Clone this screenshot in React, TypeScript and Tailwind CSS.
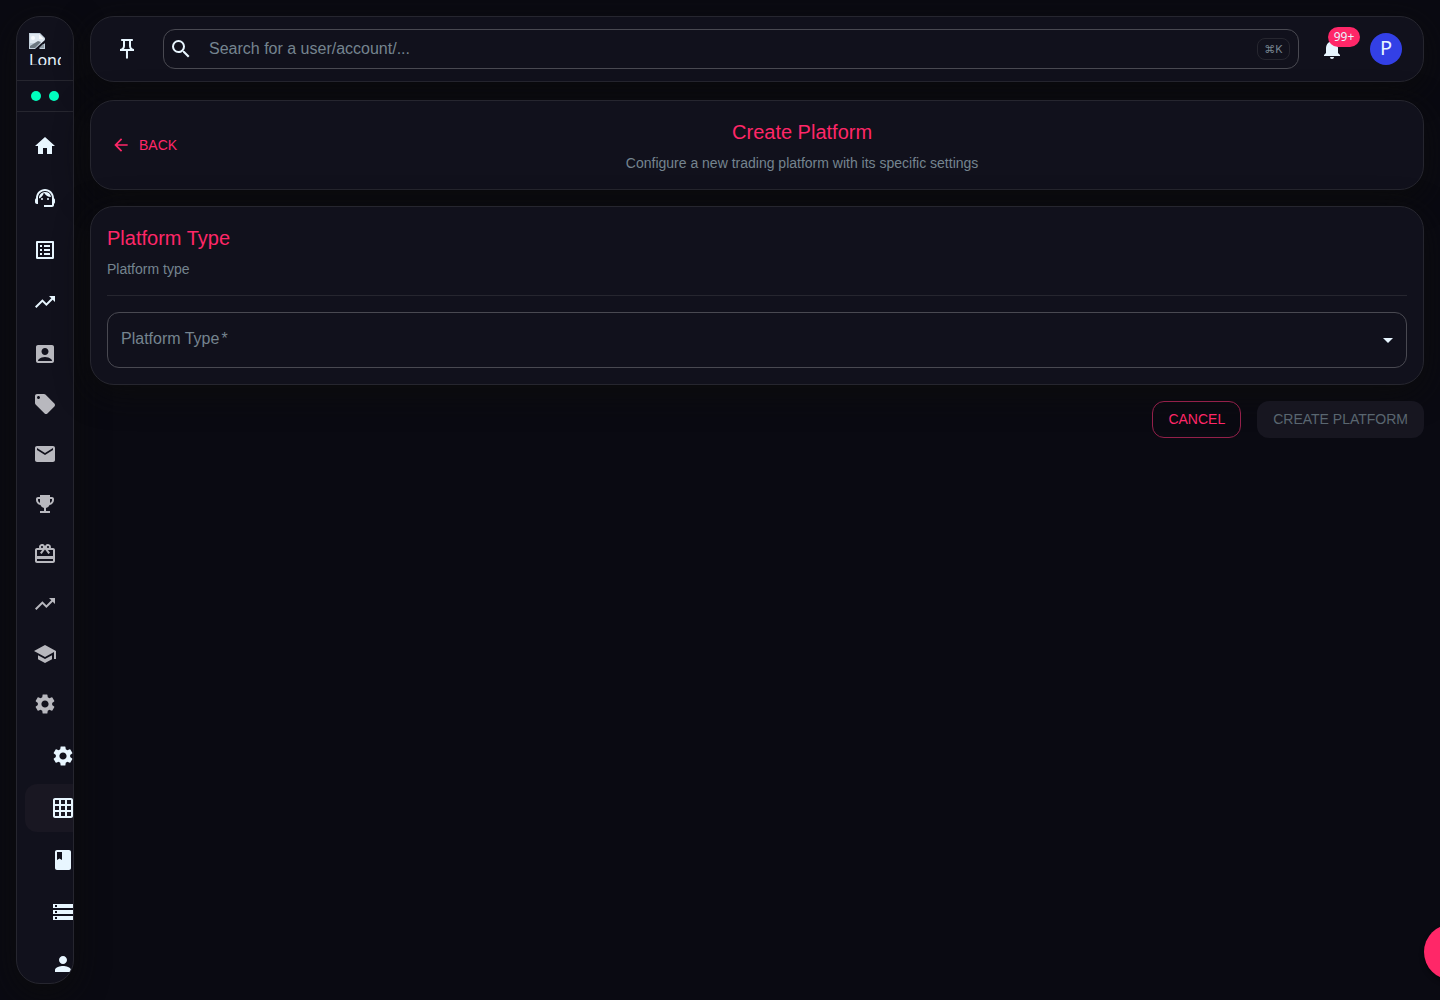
import { useState } from "react";
import type { IconType } from "react-icons";
import {
    MdAccountBox,
    MdArrowBack,
    MdArrowDropDown,
    MdBook,
    MdCardGiftcard,
    MdEmail,
    MdEmojiEvents,
    MdGridOn,
    MdHome,
    MdListAlt,
    MdLocalOffer,
    MdNotifications,
    MdOutlinePushPin,
    MdPerson,
    MdSchool,
    MdSearch,
    MdSettings,
    MdStorage,
    MdSupportAgent,
    MdTrendingUp,
} from "react-icons/md";
import { clsx } from "clsx";

type NavItem = { name: string; href: string; icon: IconType; active?: boolean };

const mainLinks: NavItem[] = [
    { name: "Home", href: "#home", icon: MdHome },
    { name: "Support", href: "#support", icon: MdSupportAgent },
    { name: "Lists", href: "#lists", icon: MdListAlt },
    { name: "Trading", href: "#trading", icon: MdTrendingUp },
];

const groups: NavItem[] = [
    { name: "Accounts", href: "#accounts", icon: MdAccountBox },
    { name: "Offers", href: "#offers", icon: MdLocalOffer },
    { name: "Mail", href: "#mail", icon: MdEmail },
    { name: "Competitions", href: "#competitions", icon: MdEmojiEvents },
    { name: "Rewards", href: "#rewards", icon: MdCardGiftcard },
    { name: "Growth", href: "#growth", icon: MdTrendingUp },
    { name: "Education", href: "#education", icon: MdSchool },
    { name: "Settings", href: "#settings", icon: MdSettings },
];

const settingsLinks: NavItem[] = [
    { name: "General", href: "#general", icon: MdSettings },
    { name: "Platforms", href: "#platforms", icon: MdGridOn, active: true },
    { name: "Documentation", href: "#documentation", icon: MdBook },
    { name: "Servers", href: "#servers", icon: MdStorage },
    { name: "Users", href: "#users", icon: MdPerson },
];

const card = "rounded-3xl border border-[#26262f] bg-[#11111c] shadow-[0_8px_32px_rgba(12,12,12,0.9)]";

function BrokenImage() {
    return (
        <svg viewBox="0 0 16 16" className="block h-4 w-4" aria-hidden="true">
            <path d="M0 0h11l5 5v11H0z" fill="#c3d0dc" />
            <path d="M1 1h9v5h5v4H1z" fill="#dfe8f0" />
            <path d="M10 1l5 5h-5z" fill="#f6f8fa" />
            <circle cx="4" cy="5" r="2" fill="#f8fbfd" />
            <path d="M1 15v-2l8-5 3 1-6 6z" fill="#6c7780" />
            <path d="M16 7v3l-6 6H6z" fill="#11111c" />
            <path d="M10 15l4-4h1v4z" fill="#8f9ba5" />
        </svg>
    );
}

function Sidebar() {
    return (
        <aside className={clsx(card, "flex w-[58px] shrink-0 flex-col overflow-hidden text-[#e8f6ff]")}>
            <a href="#home" className="flex h-16 shrink-0 flex-col items-center justify-center border-b border-[#26262f]">
                <span className="block h-8 w-8 overflow-hidden">
                    <BrokenImage />
                    <span className="block font-['Noto_Sans',sans-serif] text-base leading-[22px]">London</span>
                </span>
            </a>
            <div className="flex h-[31px] shrink-0 items-center justify-center gap-2 border-b border-[#26262f]">
                <span className="h-2.5 w-2.5 rounded-full bg-[#00ffbf]" />
                <span className="h-2.5 w-2.5 rounded-full bg-[#00ffbf]" />
            </div>
            <nav className="min-h-0 flex-1 overflow-hidden px-2 pt-[10px]">
                <ul className="flex flex-col gap-1">
                    {mainLinks.map(({ name, href, icon: Icon }) => (
                        <li key={name}>
                            <a href={href} aria-label={name} className="flex h-12 items-center justify-center rounded-xl">
                                <Icon className="h-6 w-6" />
                            </a>
                        </li>
                    ))}
                </ul>
                <ul className="mt-1 flex flex-col gap-0.5 text-[#b8b8be]">
                    {groups.map(({ name, href, icon: Icon }) => (
                        <li key={name}>
                            <a href={href} aria-label={name} className="flex h-12 items-center justify-center rounded-xl">
                                <Icon className="h-6 w-6" />
                            </a>
                        </li>
                    ))}
                </ul>
                {/* Nested settings pages, indented past the collapsed rail */}
                <ul className="mt-1 flex flex-col gap-1">
                    {settingsLinks.map(({ name, href, icon: Icon, active }) => (
                        <li key={name}>
                            <a
                                href={href}
                                aria-label={name}
                                className={clsx("flex h-12 w-20 items-center rounded-xl pl-[26px]", active && "bg-[#191722]")}
                            >
                                <Icon className="h-6 w-6 shrink-0" />
                            </a>
                        </li>
                    ))}
                </ul>
            </nav>
        </aside>
    );
}

function TopBar() {
    return (
        <header className={clsx(card, "flex h-[66px] items-center pr-[21px] pl-4")}>
            <button type="button" aria-label="Pin sidebar" className="flex h-10 w-10 items-center justify-center text-[#e8f6ff]">
                <MdOutlinePushPin className="h-6 w-6" />
            </button>
            <label className="ml-4 flex h-10 flex-1 items-center rounded-xl border border-[#494951] pr-2 pl-[5px] text-[#e8f6ff]">
                <MdSearch className="h-6 w-6 shrink-0" />
                <input
                    type="text"
                    aria-label="Search"
                    placeholder="Search for a user/account/..."
                    className="ml-4 min-w-0 flex-1 bg-transparent text-base outline-none placeholder:text-[#75848f]"
                />
                <kbd className="flex h-[22px] w-[33px] items-center justify-center rounded-lg border border-[#26262f] font-['Inter','DejaVu_Sans',sans-serif] text-[11px] text-[#75848f]">
                    ⌘K
                </kbd>
            </label>
            <button
                type="button"
                aria-label="Notifications"
                className="relative ml-[13px] flex h-10 w-10 items-center justify-center text-[#e8f6ff]"
            >
                <MdNotifications className="h-6 w-6" />
                <span className="absolute -top-0.5 left-4 flex h-5 w-8 items-center justify-center rounded-full bg-[#ff2768] font-['Noto_Sans',sans-serif] text-xs">
                    99+
                </span>
            </button>
            <button
                type="button"
                aria-label="Profile"
                className="ml-[18px] flex h-8 w-8 items-center justify-center rounded-full bg-[#3340e6] pb-0.5 font-['Noto_Sans',sans-serif] text-xl leading-5 text-[#e8f6ff]"
            >
                P
            </button>
        </header>
    );
}

export default function App() {
    const [platform, setPlatform] = useState("");

    return (
        <div className="flex h-screen gap-4 overflow-hidden bg-[#0a0a12] p-4 font-['Liberation_Sans',Arial,sans-serif]">
            <Sidebar />
            <div className="min-w-0 flex-1">
                <TopBar />
                <main className="mt-[18px] flex flex-col gap-4">
                    <section className={clsx(card, "flex items-center gap-3 p-4")}>
                        <a href="#platforms" className="flex items-center gap-2 px-1 py-1.5 pr-2 text-sm text-[#ff2768] uppercase">
                            <MdArrowBack className="h-5 w-5" />
                            Back
                        </a>
                        <div className="flex-1 text-center">
                            <h1 className="text-xl leading-[30px] text-[#ff2768]">Create Platform</h1>
                            <p className="mt-1.5 text-sm text-[#75848f]">Configure a new trading platform with its specific settings</p>
                        </div>
                    </section>

                    <form id="platform-form" className={clsx(card, "p-4")} onSubmit={(e) => e.preventDefault()}>
                        <h2 className="text-xl leading-[30px] text-[#ff2768]">Platform Type</h2>
                        <p className="mt-1.5 text-sm text-[#75848f]">Platform type</p>
                        <hr className="my-4 border-[#26262f]" />
                        <div className="relative">
                            <select
                                id="platform-type"
                                required
                                value={platform}
                                onChange={(e) => setPlatform(e.target.value)}
                                className="block h-14 w-full appearance-none rounded-xl border border-[#494951] bg-transparent px-[13px] text-base text-[#e8f6ff] outline-none"
                            >
                                <option value="" />
                            </select>
                            {!platform && (
                                <label
                                    htmlFor="platform-type"
                                    className="pointer-events-none absolute top-4 left-3.5 text-base leading-[22px] text-[#75848f]"
                                >
                                    Platform Type<span aria-hidden="true" className="ml-0.5">*</span>
                                </label>
                            )}
                            <MdArrowDropDown className="pointer-events-none absolute top-4 right-[7px] h-6 w-6 text-[#e8f6ff]" />
                        </div>
                    </form>

                    <div className="flex justify-end gap-4 text-sm">
                        <button type="button" className="h-[37px] rounded-xl border border-[#93204a] px-[15px] pb-0.5 text-[#ff2768] uppercase">
                            Cancel
                        </button>
                        <button
                            type="submit"
                            form="platform-form"
                            disabled={!platform}
                            className="h-[37px] rounded-xl bg-[#171620] px-4 pb-0.5 text-[#5a6670] uppercase"
                        >
                            Create Platform
                        </button>
                    </div>
                </main>
            </div>
            <button
                type="button"
                aria-label="Open chat"
                className="fixed -right-10 bottom-5 h-14 w-14 rounded-full bg-[#ff2768] shadow-[0_3px_5px_rgba(0,0,0,0.4)]"
            />
        </div>
    );
}
